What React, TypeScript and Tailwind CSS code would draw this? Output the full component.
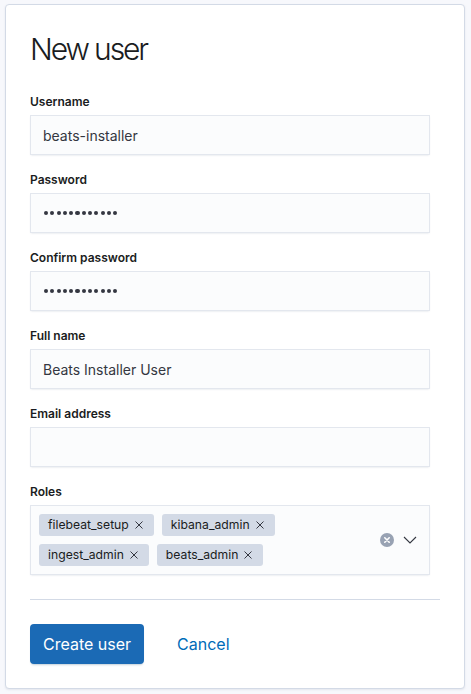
import React from 'react';

const font = { fontFamily: 'Inter, "Noto Sans", sans-serif' };

function Label({ children }: { children: React.ReactNode }) {
  return <div className="h-[18px] mb-1 text-[12px] leading-[18px] font-semibold text-[#1a1c21]">{children}</div>;
}

function Field({ label, children }: { label: string; children?: React.ReactNode }) {
  return (
    <div className="mb-4">
      <Label>{label}</Label>
      <div className="h-10 max-w-[400px] bg-[#fbfcfd] border border-[#e3e7ee] shadow-[0_1px_2px_-1px_rgba(152,162,179,0.4)] flex items-center px-3 text-[14px] text-[#343741]">
        {children}
      </div>
    </div>
  );
}

function Dots() {
  return (
    <span className="flex gap-[2.2px] pl-px">
      {Array.from({ length: 12 }).map((_, i) => (
        <span key={i} className="w-[4.1px] h-[4.1px] rounded-full bg-[#343741]" />
      ))}
    </span>
  );
}

function Chip({ name }: { name: string }) {
  return (
    <span className="inline-flex items-center h-[22px] pl-[9px] pr-[11px] rounded-[3px] bg-[#d3dae6] text-[12.2px] text-[#1a1c21]">
      {name}
      <svg className="ml-[6px]" width="8" height="8" viewBox="0 0 8 8">
        <path d="M0.5 0.5L7.5 7.5M7.5 0.5L0.5 7.5" stroke="#343741" strokeWidth="1" />
      </svg>
    </span>
  );
}

export default function App() {
  return (
    <div className="min-h-[694px] bg-[#f7f8fc] pt-1 pl-[5px] pr-[6px]" style={font}>
      <div className="w-[460px] h-[685px] bg-white border border-[#d3dae6] rounded-[4px] shadow-[0_1px_2px_rgba(152,162,179,0.2)] px-6 pt-6">
        <h1 className="text-[30px] leading-[40px] font-light tracking-[-0.07em] text-[#1a1c21] mb-6">New user</h1>

        <Field label="Username">beats-installer</Field>
        <Field label="Password"><Dots /></Field>
        <Field label="Confirm password"><Dots /></Field>
        <Field label="Full name">Beats Installer User</Field>
        <Field label="Email address" />

        <div className="mb-6">
          <Label>Roles</Label>
          <div className="h-[70px] max-w-[400px] bg-[#fbfcfd] border border-[#e3e7ee] shadow-[0_1px_2px_-1px_rgba(152,162,179,0.4)] flex items-center pl-2 pr-3">
            <div className="flex-1 flex flex-wrap gap-2">
              <Chip name="filebeat_setup" />
              <Chip name="kibana_admin" />
              <Chip name="ingest_admin" />
              <Chip name="beats_admin" />
            </div>
            <div className="flex items-center gap-[9px]">
              <svg width="14" height="14" viewBox="0 0 14 14">
                <circle cx="7" cy="7" r="7" fill="#98a2b3" />
                <path d="M4.8 4.8L9.2 9.2M9.2 4.8L4.8 9.2" stroke="#fff" strokeWidth="1.6" strokeLinecap="round" />
              </svg>
              <svg width="14" height="8" viewBox="0 0 14 8">
                <path d="M1 1L7 7L13 1" fill="none" stroke="#343741" strokeWidth="1.1" />
              </svg>
            </div>
          </div>
        </div>

        <div className="border-t border-[#d3dae6] mb-6" />

        <div className="flex items-center gap-[33px]">
          <button className="h-10 px-[13px] rounded-[4px] bg-[#1b6ab5] text-white text-[16px] shadow-[0_2px_2px_-1px_rgba(54,97,126,0.3)]">
            Create user
          </button>
          <button className="text-[16px] text-[#006bb8]">Cancel</button>
        </div>
      </div>
    </div>
  );
}
